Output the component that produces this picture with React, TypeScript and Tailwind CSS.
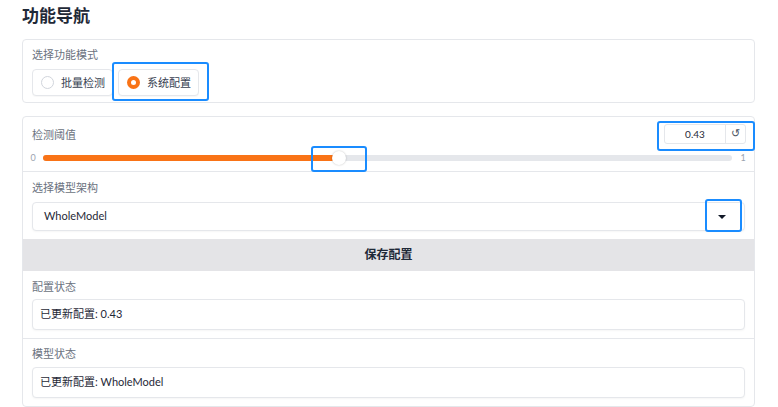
const font = { fontFamily: 'Lato, "Noto Sans CJK SC", sans-serif' };

function Highlight({ className }: { className: string }) {
  return (
    <div
      className={`pointer-events-none absolute rounded-[3px] border-[2px] border-[#1a8cff] ${className}`}
    />
  );
}

function Radio({ label, checked }: { label: string; checked?: boolean }) {
  return (
    <div className="flex h-[27px] w-[81px] items-center gap-[7px] rounded-[4px] border border-gray-200 bg-white pl-[8px] shadow-[0_1px_1px_rgba(0,0,0,0.03)]">
      {checked ? (
        <span className="flex h-[13px] w-[13px] items-center justify-center rounded-full bg-[#f97316]">
          <span className="h-[5px] w-[5px] rounded-full bg-white" />
        </span>
      ) : (
        <span className="h-[13px] w-[13px] rounded-full border border-gray-300 bg-white" />
      )}
      <span className="text-[11px] leading-none text-[#374151]">{label}</span>
    </div>
  );
}

function StatusBox({ label, value, pt, mt }: { label: string; value: string; pt: string; mt: string }) {
  return (
    <div className={`px-[9px] pb-[8px] ${pt}`}>
      <div className="text-[11px] leading-[16px] text-[#6b7280]">{label}</div>
      <div
        className={`flex h-[31px] items-center rounded-[4px] border border-gray-200 bg-white pl-[7px] text-[11px] text-[#1f2937] shadow-[0_1px_2px_rgba(0,0,0,0.04)] ${mt}`}
      >
        {value}
      </div>
    </div>
  );
}

export default function App() {
  const threshold = 0.43;

  return (
    <div className="relative h-[407px] w-[778px] bg-white pl-[22px] pr-[23px]" style={font}>
      <h1 className="pt-[2px] text-[17px] font-bold leading-[28px] text-[#1f2937]">功能导航</h1>

      <div className="mt-[9px] rounded-[4px] border border-gray-200 px-[9px] pb-[6px] pt-[7px]">
        <div className="text-[11px] leading-[16px] text-[#6b7280]">选择功能模式</div>
        <div className="mt-[6px] flex gap-[5px]">
          <Radio label="批量检测" />
          <Radio label="系统配置" checked />
        </div>
      </div>

      <div className="mt-[13px] rounded-[4px] border border-gray-200">
        <div className="border-b border-gray-200 pb-[6px] pt-[7px]">
          <div className="flex items-start justify-between pl-[9px] pr-[8px]">
            <div className="pt-[3px] text-[11px] leading-[16px] text-[#6b7280]">检测阈值</div>
            <div className="flex h-[20px] w-[82px] items-center rounded-[3px] border border-gray-200 bg-white">
              <span className="flex-1 text-center text-[10px] text-[#1f2937]">0.43</span>
              <span
                className="flex h-full w-[20px] items-center justify-center border-l border-gray-200 text-[11px] text-[#4b5563]"
                style={{ fontFamily: '"DejaVu Sans", sans-serif' }}
              >
                ↺
              </span>
            </div>
          </div>
          <div className="mt-[7px] grid h-[14px] grid-cols-[20px_1fr_22px] items-center">
            <span className="text-center text-[9px] text-[#9ca3af]">0</span>
            <div className="relative h-[6px] rounded-full bg-[#e5e7eb]">
              <div className="h-full rounded-full bg-[#f97316]" style={{ width: `${threshold * 100}%` }} />
              <div
                className="absolute top-1/2 h-[14px] w-[14px] -translate-x-1/2 -translate-y-1/2 rounded-full bg-white shadow-[0_0_2px_rgba(0,0,0,0.25)]"
                style={{ left: `${threshold * 100}%` }}
              />
            </div>
            <span className="text-center text-[9px] text-[#9ca3af]">1</span>
          </div>
        </div>

        <div className="px-[9px] pb-[8px] pt-[8px]">
          <div className="text-[11px] leading-[16px] text-[#6b7280]">选择模型架构</div>
          <div className="mt-[6px] flex h-[29px] items-center justify-between rounded-[4px] border border-gray-200 bg-white pl-[11px] pr-[18px] shadow-[0_1px_2px_rgba(0,0,0,0.04)]">
            <span className="text-[11px] text-[#1f2937]">WholeModel</span>
            <span className="h-0 w-0 border-l-[4px] border-r-[4px] border-t-[4px] border-l-transparent border-r-transparent border-t-[#111827]" />
          </div>
        </div>

        <button className="flex h-[32px] w-full items-center justify-center bg-[#e4e4e7] text-[12px] font-bold text-[#1f2937]">
          保存配置
        </button>

        <div className="border-b border-gray-200">
          <StatusBox label="配置状态" value="已更新配置: 0.43" pt="pt-[8px]" mt="mt-[4px]" />
        </div>
        <StatusBox label="模型状态" value="已更新配置: WholeModel" pt="pt-[7px]" mt="mt-[5px]" />
      </div>

      <Highlight className="left-[112px] top-[62px] h-[39px] w-[97px]" />
      <Highlight className="left-[657px] top-[121px] h-[30px] w-[98px]" />
      <Highlight className="left-[311px] top-[146px] h-[26px] w-[56px]" />
      <Highlight className="left-[705px] top-[199px] h-[33px] w-[37px]" />
    </div>
  );
}
